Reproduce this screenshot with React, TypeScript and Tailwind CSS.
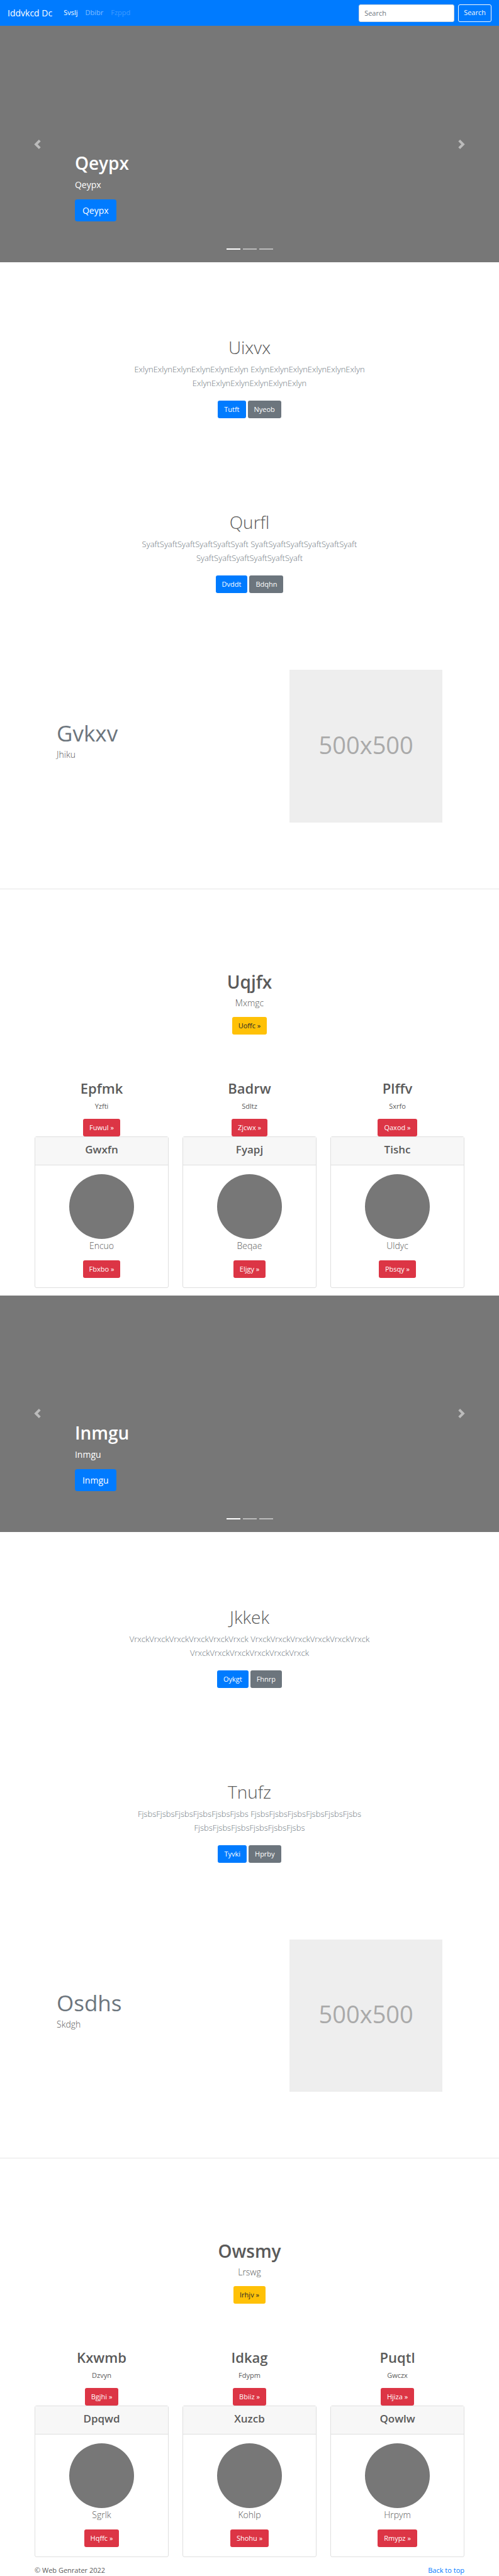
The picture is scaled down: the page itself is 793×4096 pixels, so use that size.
import type { ReactNode } from "react";

type Item = { title: string; text: string; action: string };
type Intro = { title: string; word: string; primary: string; secondary: string };
type Block = {
  slide: string;
  intros: Intro[];
  feature: { title: string; text: string };
  promo: Item;
  columns: Item[];
  cards: Item[];
};

const blocks: Block[] = [
  {
    slide: "Qeypx",
    intros: [
      { title: "Uixvx", word: "Exlyn", primary: "Tutft", secondary: "Nyeob" },
      { title: "Qurfl", word: "Syaft", primary: "Dvddt", secondary: "Bdqhn" },
    ],
    feature: { title: "Gvkxv", text: "Jhiku" },
    promo: { title: "Uqjfx", text: "Mxmgc", action: "Uoffc" },
    columns: [
      { title: "Epfmk", text: "Yzfti", action: "Fuwul" },
      { title: "Badrw", text: "Sdltz", action: "Zjcwx" },
      { title: "Plffv", text: "Sxrfo", action: "Qaxod" },
    ],
    cards: [
      { title: "Gwxfn", text: "Encuo", action: "Fbxbo" },
      { title: "Fyapj", text: "Beqae", action: "Eljgy" },
      { title: "Tishc", text: "Uldyc", action: "Pbsqy" },
    ],
  },
  {
    slide: "Inmgu",
    intros: [
      { title: "Jkkek", word: "Vrxck", primary: "Oykgt", secondary: "Fhnrp" },
      { title: "Tnufz", word: "Fjsbs", primary: "Tyvki", secondary: "Hprby" },
    ],
    feature: { title: "Osdhs", text: "Skdgh" },
    promo: { title: "Owsmy", text: "Lrswg", action: "Irhjv" },
    columns: [
      { title: "Kxwmb", text: "Dzvyn", action: "Bgjhi" },
      { title: "Idkag", text: "Fdypm", action: "Bbiiz" },
      { title: "Puqtl", text: "Gwczx", action: "Hjiza" },
    ],
    cards: [
      { title: "Dpqwd", text: "Sgrlk", action: "Hqffc" },
      { title: "Xuzcb", text: "Kohlp", action: "Shohu" },
      { title: "Qowlw", text: "Hrpym", action: "Rmypz" },
    ],
  },
];

const tones = {
  primary: "bg-[#007bff] text-white",
  secondary: "bg-[#6c757d] text-white",
  danger: "bg-[#dc3545] text-white",
  warning: "bg-[#ffc107] text-[#212529]",
};

function Button({ tone, children }: { tone: keyof typeof tones; children: ReactNode }) {
  return (
    <a href="#" className={`inline-block rounded-[3px] px-[10px] align-top text-[11px] leading-[28px] ${tones[tone]}`}>
      {children}
    </a>
  );
}

function Container({ children, className = "" }: { children: ReactNode; className?: string }) {
  return <div className={`mx-auto w-full max-w-[705px] px-[11px] ${className}`}>{children}</div>;
}

function Navbar() {
  return (
    <nav className="flex h-[41px] items-center bg-[#007bff] px-3 text-[11px] text-white">
      <a href="#" className="mr-[18px] text-[14px]">
        Iddvkcd Dc
      </a>
      <div className="flex gap-3">
        <a href="#">Svslj</a>
        <a href="#" className="text-white/50">
          Dbibr
        </a>
        <a href="#" aria-disabled="true" className="text-white/25">
          Fzppd
        </a>
      </div>
      <form className="ml-auto flex gap-[6px]" onSubmit={(e) => e.preventDefault()}>
        <input
          type="text"
          aria-label="Search"
          placeholder="Search"
          className="h-7 w-[152px] rounded-[3px] border border-[#ced4da] bg-white px-2 text-[#495057] placeholder:text-[#6c757d]"
        />
        <button type="submit" className="h-7 rounded-[3px] border border-[#f8f9fa] px-2 text-[#f8f9fa]">
          Search
        </button>
      </form>
    </nav>
  );
}

function Carousel({ label }: { label: string }) {
  return (
    <section className="relative h-[376px] bg-[#777] text-white">
      <button
        type="button"
        aria-label="Previous"
        className="absolute inset-y-0 left-0 flex w-[15%] items-center justify-center opacity-50"
      >
        <svg viewBox="0 0 8 8" className="size-[15px]" fill="#fff">
          <path d="M5.25 0l-4 4 4 4 1.5-1.5-2.5-2.5 2.5-2.5-1.5-1.5z" />
        </svg>
      </button>
      <button
        type="button"
        aria-label="Next"
        className="absolute inset-y-0 right-0 flex w-[15%] items-center justify-center opacity-50"
      >
        <svg viewBox="0 0 8 8" className="size-[15px]" fill="#fff">
          <path d="M2.75 0l-1.5 1.5 2.5 2.5-2.5 2.5 1.5 1.5 4-4-4-4z" />
        </svg>
      </button>
      <div className="absolute inset-x-[15%] bottom-[65px]">
        <h1 className="mb-[6px] text-[28px] leading-[35px] font-semibold">{label}</h1>
        <p className="mb-3 text-[14px] leading-[22px]">{label}</p>
        <a href="#" className="inline-block rounded-[4px] bg-[#007bff] px-3 align-top text-[14px] leading-[35px]">
          {label}
        </a>
      </div>
      <div className="absolute inset-x-0 bottom-[20px] flex justify-center gap-1">
        <span className="h-[2px] w-[22px] bg-white" />
        <span className="h-[2px] w-[22px] bg-white/50" />
        <span className="h-[2px] w-[22px] bg-white/50" />
      </div>
    </section>
  );
}

function IntroSection({ title, word, primary, secondary }: Intro) {
  const run = word.repeat(6);
  return (
    <section className="text-center">
      <h1 className="mb-[5px] text-[28px] leading-[37px] font-light">{title}</h1>
      <p className="mx-auto mb-[17px] max-w-[430px] text-[13px] leading-[22px] font-light text-[#6c757d]">
        {run} {run} <span className="block">{run}</span>
      </p>
      <div className="flex justify-center gap-[3px]">
        <Button tone="primary">{primary}</Button>
        <Button tone="secondary">{secondary}</Button>
      </div>
    </section>
  );
}

function PageBlock({ block }: { block: Block }) {
  return (
    <>
      <Carousel label={block.slide} />
      <div className="flex flex-col gap-[147px] pt-[117px]">
        {block.intros.map((intro) => (
          <IntroSection key={intro.title} {...intro} />
        ))}
      </div>

      <Container className="pt-[122px] pb-[105px]">
        <div className="grid grid-cols-12 gap-x-[22px] px-[35px]">
          <div className="col-span-7 pt-[81px]">
            <h2 className="mb-[3px] text-[35px] leading-[40px] text-[#6c757d]">{block.feature.title}</h2>
            <p className="text-[14px] leading-[22px] font-light">{block.feature.text}</p>
          </div>
          <div className="col-span-5 flex aspect-square items-center justify-center bg-[#eee] pb-1 text-[38px] text-[#aaa]">
            500x500
          </div>
        </div>
      </Container>

      <hr className="border-[#e5e5e5]" />

      <section className="pt-[129px] text-center">
        <h1 className="mb-1 text-[28px] leading-[37px] font-semibold">{block.promo.title}</h1>
        <p className="mb-[11px] text-[14px] leading-[22px] font-light">{block.promo.text}</p>
        <Button tone="warning">{block.promo.action} »</Button>
      </section>

      <Container className="pt-[70px] pb-3 text-center">
        <div className="grid grid-cols-3 gap-x-[22px]">
          {block.columns.map((item) => (
            <div key={item.title}>
              <h2 className="mb-1 text-[22px] leading-[30px] font-semibold">{item.title}</h2>
              <p className="mb-[10px] text-[11px] leading-5">{item.text}</p>
              <Button tone="danger">{item.action} »</Button>
            </div>
          ))}
          {block.cards.map((item) => (
            <article key={item.title} className="rounded-[3px] border border-[#dfdfdf] bg-white">
              <h4 className="h-[45px] border-b border-[#dfdfdf] bg-[#f7f7f7] pt-[9px] text-[17px] leading-[21px] font-semibold">
                {item.title}
              </h4>
              <div className="pt-[14px] pb-[15px]">
                <div className="mx-auto size-[103px] rounded-full bg-[#777]" />
                <p className="mb-3 text-[14px] leading-[22px] font-light">{item.text}</p>
                <Button tone="danger">{item.action} »</Button>
              </div>
            </article>
          ))}
        </div>
      </Container>
    </>
  );
}

export default function App() {
  return (
    <div className="bg-white font-['Open_Sans','Noto_Sans',sans-serif] text-[#5a5a5a]">
      <Navbar />
      <main>
        {blocks.map((block) => (
          <PageBlock key={block.slide} block={block} />
        ))}
      </main>
      <footer>
        <Container className="flex justify-between text-[11px] leading-[18px]">
          <p>© Web Genrater 2022</p>
          <a href="#" className="text-[#007bff]">
            Back to top
          </a>
        </Container>
      </footer>
    </div>
  );
}
